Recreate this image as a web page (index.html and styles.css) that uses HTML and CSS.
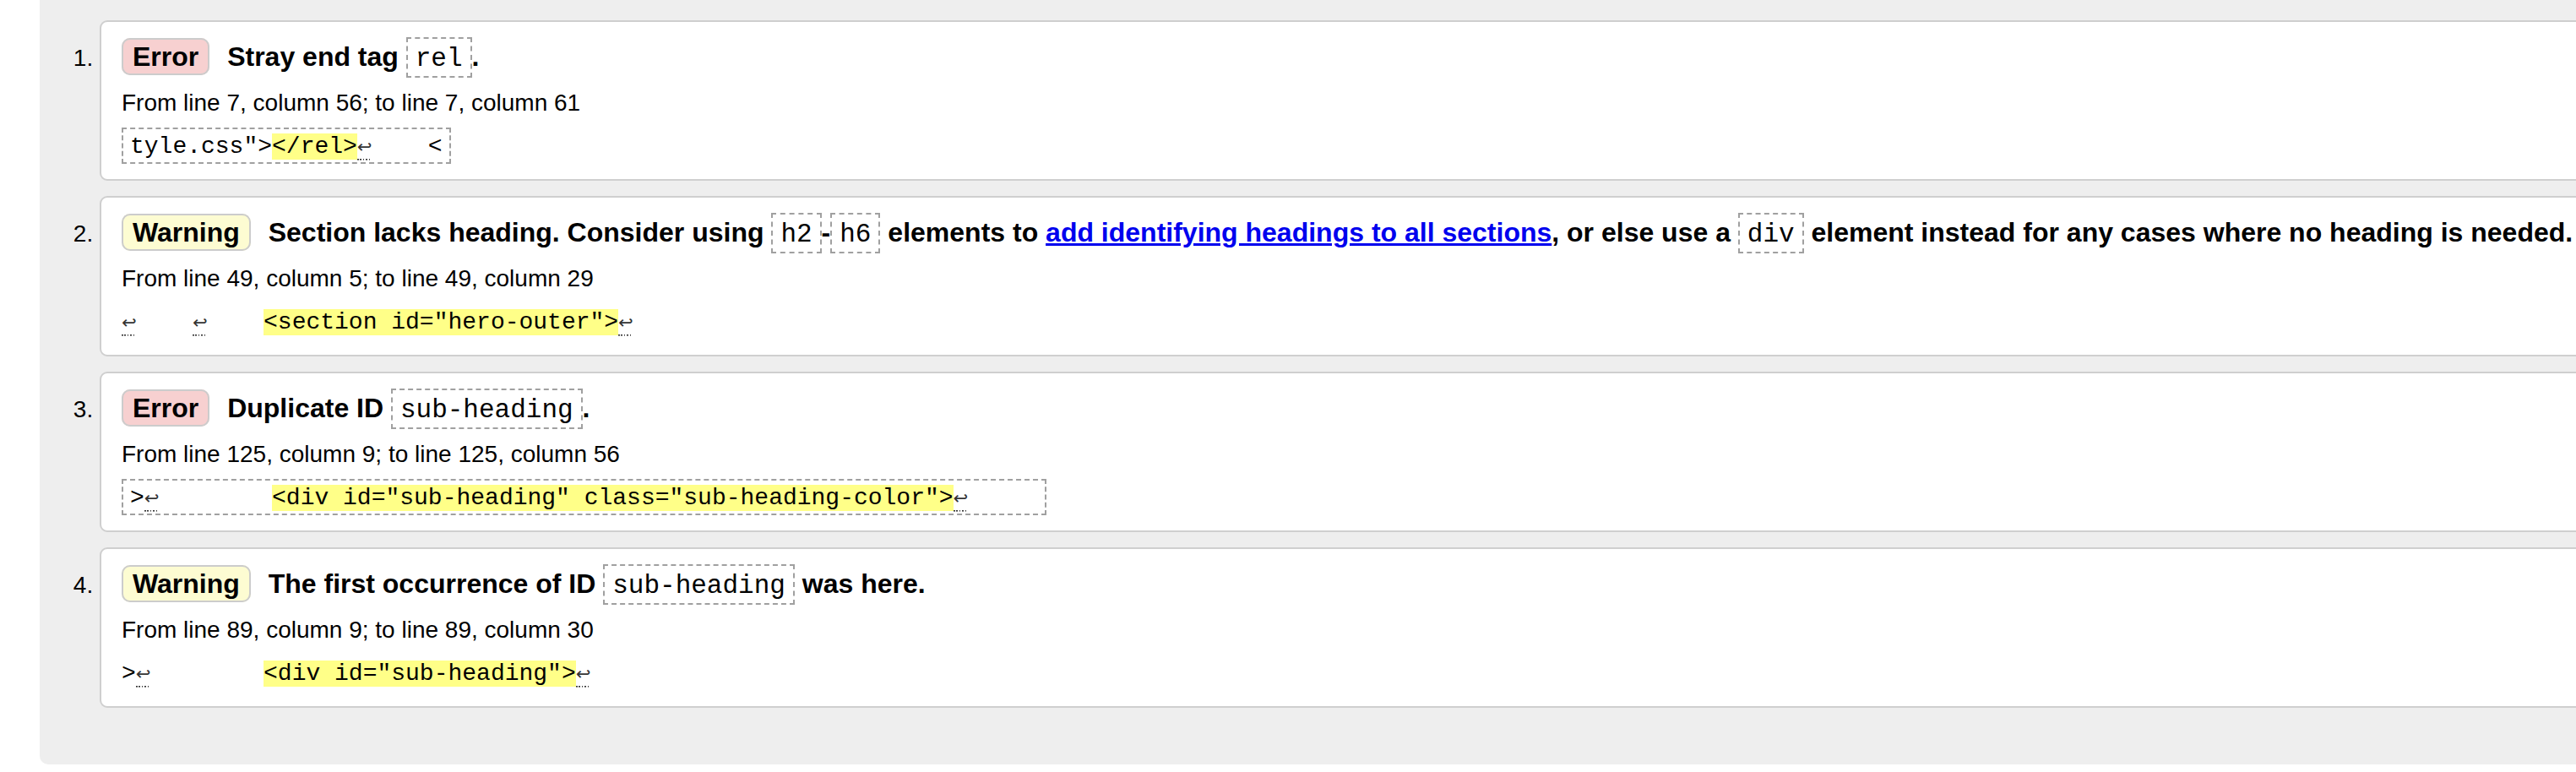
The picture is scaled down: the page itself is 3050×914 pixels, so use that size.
FILE: index.html
```html
<!DOCTYPE html>
<html lang="en">
<head>
<meta charset="utf-8">
<title>Nu Html Checker results</title>
<link rel="stylesheet" href="styles.css">
</head>
<body>
<div class="results">
  <ol class="messages">
    <li class="card">
      <p class="msg"><strong class="badge badge-error">Error</strong> <span>Stray end tag <code class="inl">rel</code>.</span></p>
      <p class="loc">From line 7, column 56; to line 7, column 61</p>
      <p class="extract"><code class="src boxed">tyle.css"&gt;<mark>&lt;/rel&gt;</mark><span class="lf">↩</span>    &lt;</code></p>
    </li>
    <li class="card">
      <p class="msg"><strong class="badge badge-warning">Warning</strong> <span>Section lacks heading. Consider using <code class="inl">h2</code>-<code class="inl">h6</code> elements to <a href="#">add identifying headings to all sections</a>, or else use a <code class="inl">div</code> element instead for any cases where no heading is needed.</span></p>
      <p class="loc">From line 49, column 5; to line 49, column 29</p>
      <p class="extract"><code class="src"><span class="lf">↩</span>    <span class="lf">↩</span>    <mark>&lt;section id="hero-outer"&gt;</mark><span class="lf">↩</span></code></p>
    </li>
    <li class="card">
      <p class="msg"><strong class="badge badge-error">Error</strong> <span>Duplicate ID <code class="inl">sub-heading</code>.</span></p>
      <p class="loc">From line 125, column 9; to line 125, column 56</p>
      <p class="extract"><code class="src boxed">&gt;<span class="lf">↩</span>        <mark>&lt;div id="sub-heading" class="sub-heading-color"&gt;</mark><span class="lf">↩</span>     </code></p>
    </li>
    <li class="card">
      <p class="msg"><strong class="badge badge-warning">Warning</strong> <span>The first occurrence of ID <code class="inl">sub-heading</code> was here.</span></p>
      <p class="loc">From line 89, column 9; to line 89, column 30</p>
      <p class="extract"><code class="src">&gt;<span class="lf">↩</span>        <mark>&lt;div id="sub-heading"&gt;</mark><span class="lf">↩</span></code></p>
    </li>
  </ol>
</div>
</body>
</html>
```

FILE: styles.css
```css
html {
  overflow: hidden;
  background: #fff;
}

body {
  margin: 0;
  font-family: "Liberation Sans", Arial, Helvetica, sans-serif;
  color: #000;
}

.results {
  margin-left: 47px;
  width: 3300px;
  background: #eee;
  padding: 24px 0 67px 71px;
  border-bottom-left-radius: 10px;
}

.messages {
  margin: 0;
  padding: 0;
  list-style: decimal outside;
  font-size: 28px;
}

.card {
  background: #fff;
  border: 2px solid #cfcfcf;
  border-radius: 9px;
  padding: 21px 24px 20px;
  margin-bottom: 18px;
}

.card:last-child {
  margin-bottom: 0;
}

.msg {
  margin: 0;
  font-size: 32px;
  line-height: 40px;
  font-weight: bold;
  white-space: nowrap;
}

.badge {
  padding: 2px 11px;
  border: 2px solid #cccccc;
  border-radius: 10px;
  margin-right: 12px;
}

.badge-error {
  background: #f7d0d0;
}

.badge-warning {
  background: #fdfcd2;
}

.msg a {
  color: #0000ee;
  text-decoration: underline;
}

.inl {
  font-family: "Liberation Mono", "Courier New", monospace;
  font-weight: normal;
  font-size: 31px;
  line-height: 1;
  padding: 6px 9px 3px;
  border: 2px dashed #a0a0a0;
}

.loc {
  margin: 17px 0 0;
  font-size: 28px;
  line-height: 36px;
}

.extract {
  margin: 16px 0 0;
  font-family: "Liberation Mono", "Courier New", monospace;
  font-size: 28px;
  line-height: 36px;
}

.src {
  font-family: "Liberation Mono", "Courier New", monospace;
  font-size: 28px;
  white-space: pre;
}

.src.boxed {
  padding: 5px 8px 3px;
  border: 2px dashed #a0a0a0;
}

mark {
  background: #ffff88;
  color: #000;
}

.lf {
  display: inline-block;
  width: 16.8px;
  font-family: "DejaVu Sans", sans-serif;
  font-size: 21px;
  line-height: 17px;
  color: #333;
  padding-bottom: 7px;
  background-image: repeating-linear-gradient(to right, #333 0 1.6px, transparent 1.6px 3.4px);
  background-size: 100% 1.6px;
  background-position: left bottom;
  background-repeat: no-repeat;
}
```
